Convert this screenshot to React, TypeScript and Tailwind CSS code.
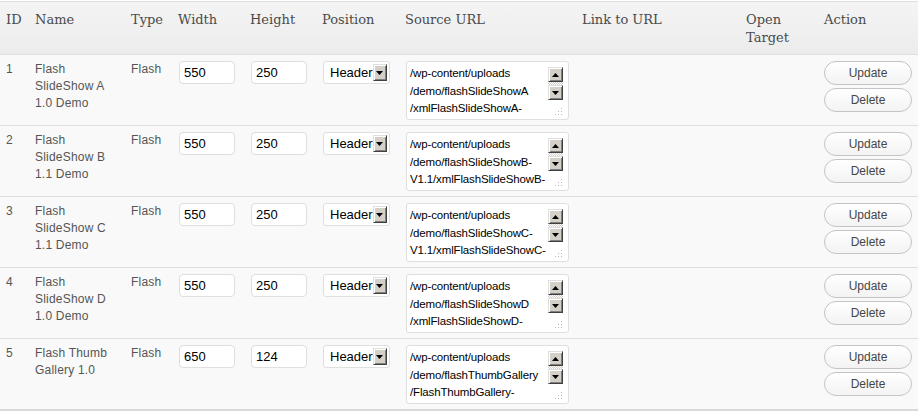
import { Fragment } from 'react'

interface SlideRow {
  id: number
  name: string[]
  type: string
  width: string
  height: string
  position: string
  source: string[]
}

const ROWS: SlideRow[] = [
  {
    id: 1,
    name: ['Flash', 'SlideShow A', '1.0 Demo'],
    type: 'Flash',
    width: '550',
    height: '250',
    position: 'Header',
    source: ['/wp-content/uploads', '/demo/flashSlideShowA', '/xmlFlashSlideShowA-']
  },
  {
    id: 2,
    name: ['Flash', 'SlideShow B', '1.1 Demo'],
    type: 'Flash',
    width: '550',
    height: '250',
    position: 'Header',
    source: ['/wp-content/uploads', '/demo/flashSlideShowB-', 'V1.1/xmlFlashSlideShowB-']
  },
  {
    id: 3,
    name: ['Flash', 'SlideShow C', '1.1 Demo'],
    type: 'Flash',
    width: '550',
    height: '250',
    position: 'Header',
    source: ['/wp-content/uploads', '/demo/flashSlideShowC-', 'V1.1/xmlFlashSlideShowC-']
  },
  {
    id: 4,
    name: ['Flash', 'SlideShow D', '1.0 Demo'],
    type: 'Flash',
    width: '550',
    height: '250',
    position: 'Header',
    source: ['/wp-content/uploads', '/demo/flashSlideShowD', '/xmlFlashSlideShowD-']
  },
  {
    id: 5,
    name: ['Flash Thumb', 'Gallery 1.0'],
    type: 'Flash',
    width: '650',
    height: '124',
    position: 'Header',
    source: ['/wp-content/uploads', '/demo/flashThumbGallery', '/FlashThumbGallery-']
  }
]

const GRID = 'grid grid-cols-[29px_96px_47px_72px_72px_83px_177px_164px_78px_1fr]'

// old windows style 3d arrow button
function ArrowButton({ up, className }: { up?: boolean; className?: string }): JSX.Element {
  return (
    <div
      className={`flex items-center justify-center bg-[#d4d0c8] border border-t-[#dfdfdf] border-l-[#dfdfdf] border-r-[#404040] border-b-[#404040] shadow-[inset_1px_1px_#ffffff,inset_-1px_-1px_#808080] ${className ?? ''}`}
    >
      <svg width="7" height="4" viewBox="0 0 7 4">
        {up ? <path d="M3.5 0 L7 4 L0 4 Z" fill="#000" /> : <path d="M0 0 L7 0 L3.5 4 Z" fill="#000" />}
      </svg>
    </div>
  )
}

function SourceBox({ lines }: { lines: string[] }): JSX.Element {
  return (
    <div className="flex w-[163px] h-[59px] bg-white border border-[#dfdfdf] rounded-[3px] ml-px">
      <div className="flex-1 pl-[3px] pt-[3px] text-[11.5px] leading-[17.5px] text-black font-['Liberation_Sans',Arial,sans-serif] whitespace-nowrap overflow-hidden tracking-[-0.15px]">
        {lines.map(l => (
          <div key={l}>{l}</div>
        ))}
      </div>
      <div className="w-[15px] mr-[5px] flex flex-col pt-[5px]">
        <ArrowButton up className="h-[15px]" />
        <div className="h-[3px] bg-[repeating-conic-gradient(#d4d0c8_0_25%,#ffffff_0_50%)] bg-[length:2px_2px]" />
        <ArrowButton className="h-[15px]" />
        <div className="flex-1 flex items-end justify-end pb-[3px]">
          <svg width="8" height="8" viewBox="0 0 8 8">
            <rect x="6" y="0" width="1" height="1" fill="#b8b8b8" />
            <rect x="3" y="3" width="1" height="1" fill="#b8b8b8" />
            <rect x="6" y="3" width="1" height="1" fill="#b8b8b8" />
            <rect x="0" y="6" width="1" height="1" fill="#b8b8b8" />
            <rect x="3" y="6" width="1" height="1" fill="#b8b8b8" />
            <rect x="6" y="6" width="1" height="1" fill="#b8b8b8" />
          </svg>
        </div>
      </div>
    </div>
  )
}

function TextBox({ value }: { value: string }): JSX.Element {
  return (
    <div className="ml-px w-[56px] h-[23px] bg-white border border-[#dfdfdf] rounded-[4px] px-[4px] text-[13px] leading-[21px] text-black font-['Liberation_Sans',Arial,sans-serif]">
      {value}
    </div>
  )
}

function ActionButton({ label }: { label: string }): JSX.Element {
  return (
    <button
      type="button"
      className="w-[88px] h-[24px] rounded-full border border-[#c4c4c4] bg-gradient-to-b from-white to-[#f3f3f3] text-[12px] text-[#464646] font-['Liberation_Sans',Arial,sans-serif]"
    >
      {label}
    </button>
  )
}

export default function App(): JSX.Element {
  const headers = ['ID', 'Name', 'Type', 'Width', 'Height', 'Position', 'Source URL', 'Link to URL', 'Open Target', 'Action']

  return (
    <div className="w-[918px] h-[412px] bg-white pt-px overflow-hidden">
      <div className="border-t border-[#dfdfdf]">
        {/* header */}
        <div className={`${GRID} h-[53px] border-b border-[#dfdfdf] bg-gradient-to-b from-[#f4f4f4] to-[#ececec] font-['DejaVu_Serif',Georgia,serif] text-[13px] leading-[18px] text-[#4a4a4a]`}>
          {headers.map(h => (
            <div key={h} className="pl-[6px] pt-[9px] pr-2">
              {h === 'Open Target' ? (
                <Fragment>Open<br />Target</Fragment>
              ) : h}
            </div>
          ))}
        </div>

        {/* rows */}
        {ROWS.map((row, i) => (
          <div
            key={row.id}
            className={`${GRID} bg-[#f9f9f9] ${i === ROWS.length - 1 ? 'border-b-2 border-[#d9d9d9] h-[72px]' : 'h-[71px] border-b border-[#dfdfdf]'}`}
          >
            <div className="pl-[6px] pt-[6px] text-[12px] leading-[17px] text-[#555] font-['Liberation_Sans',Arial,sans-serif]">{row.id}</div>
            <div className="pl-[6px] pt-[6px] text-[12px] leading-[17px] text-[#555] font-['Liberation_Sans',Arial,sans-serif] tracking-[0.2px]">
              {row.name.map(n => (
                <div key={n}>{n}</div>
              ))}
            </div>
            <div className="pl-[6px] pt-[6px] text-[12px] leading-[17px] text-[#555] font-['Liberation_Sans',Arial,sans-serif] tracking-[0.2px]">{row.type}</div>
            <div className="pl-[6px] pt-[6px]"><TextBox value={row.width} /></div>
            <div className="pl-[6px] pt-[6px]"><TextBox value={row.height} /></div>
            <div className="pl-[6px] pt-[6px]">
              <div className="ml-px w-[67px] h-[23px] bg-white border border-[#dfdfdf] rounded-[3px] flex items-center pl-[6px] pr-[2px] text-[13px] text-black font-['Liberation_Sans',Arial,sans-serif]">
                <span className="flex-1">{row.position}</span>
                <ArrowButton className="w-[16px] h-[17px]" />
              </div>
            </div>
            <div className="pl-[6px] pt-[6px]"><SourceBox lines={row.source} /></div>
            <div />
            <div />
            <div className="pl-[6px] pt-[6px] flex flex-col gap-[3px]">
              <ActionButton label="Update" />
              <ActionButton label="Delete" />
            </div>
          </div>
        ))}
      </div>
    </div>
  )
}
